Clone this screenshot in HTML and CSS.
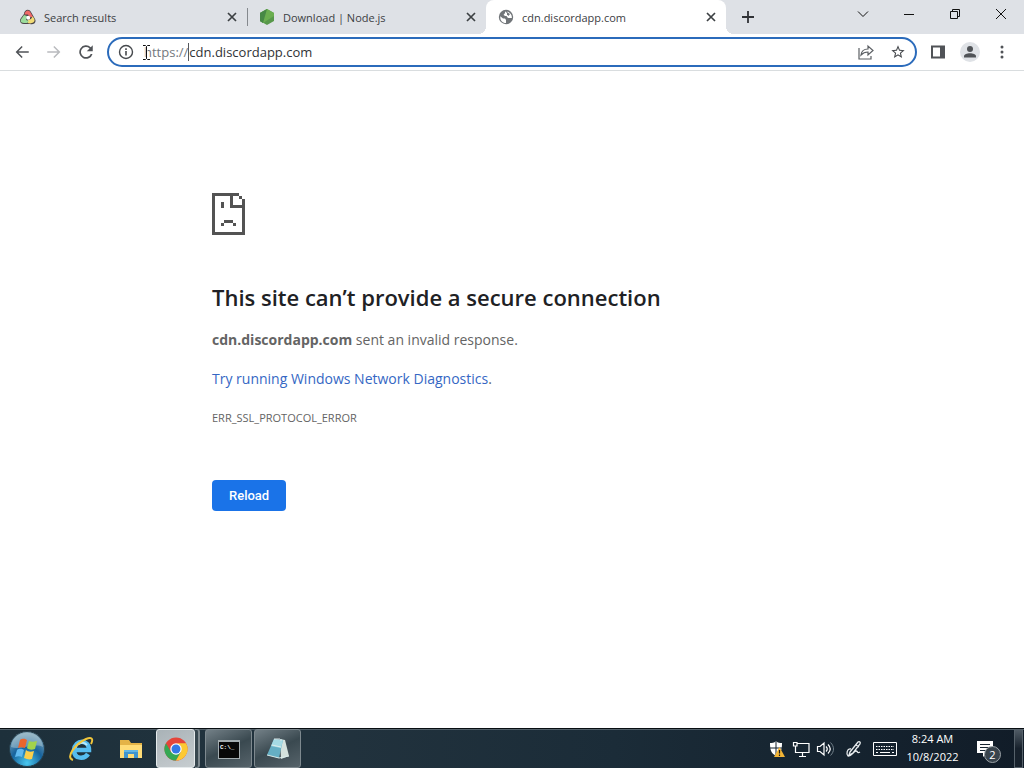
FILE: index.html
```html
<!DOCTYPE html>
<html lang="en">
<head>
<meta charset="utf-8">
<title>cdn.discordapp.com</title>
<link rel="stylesheet" href="styles.css">
</head>
<body>
<header class="browser">
  <div class="tabstrip">
    <div class="tab">
      <svg class="favicon" viewBox="0 0 16 16"><path d="M4 5C4 1 9-1 11 3l4 7c2 4-2 6-5 5H4C0 15-1 11 1 9z" fill="#4a4446"/><path d="M4.500 5.500C5 1 9 0 10.500 3.500L13 8 9.500 8 8 5.500z" fill="#f06a68"/><path d="M12.500 7.500c5 5 0 8-5 6.500L8 11l3-1z" fill="#f2dc76"/><path d="M4 6l3 1-1 4 3 1-2 2H4c-4 0-4-3-2-5z" fill="#9bdc9c"/><circle cx="8.200" cy="8.700" r="2" fill="#fff"/></svg>
      <span class="tab-title">Search results</span>
      <button class="tab-close" aria-label="Close tab"><svg viewBox="0 0 16 16"><path d="M4 4l8 8M12 4l-8 8"/></svg></button>
    </div>
    <div class="tab divided">
      <svg class="favicon" viewBox="0 0 16 16"><path d="M8 0l7 4v8l-7 4-7-4V4z" fill="#58984b"/><path d="M8 0l7 4v3L4 14l-3-2V4z" fill="#6bae50"/><path d="M8 0L4 14l-3-2V4z" fill="#478846"/></svg>
      <span class="tab-title">Download | Node.js</span>
      <button class="tab-close" aria-label="Close tab"><svg viewBox="0 0 16 16"><path d="M4 4l8 8M12 4l-8 8"/></svg></button>
    </div>
    <div class="tab active">
      <svg class="favicon" viewBox="0 0 16 16"><circle cx="8" cy="8" r="7.200" fill="#717579"/><path d="M2.300 7.200L5 9.500h2l1 1.500v3C4 14 2 11 2.300 7.200zM7.500 2.200c-1 1.500 0 2-1.500 3-1 .8.500 1.800 2 1.800 1.500.2 1 1.800 2.500 2h3.300c.5-3-2-6.300-5-6.300.6 1.400-.3 1.600-1.300-.5z" fill="#fff"/><path d="M9 3l3 2-1.500 2L9 5.500z" fill="#717579"/></svg>
      <span class="tab-title">cdn.discordapp.com</span>
      <button class="tab-close" aria-label="Close tab"><svg viewBox="0 0 16 16"><path d="M4 4l8 8M12 4l-8 8"/></svg></button>
    </div>
    <button class="new-tab" aria-label="New tab"><svg viewBox="0 0 16 16"><path d="M8 2v12M2 8h12"/></svg></button>
    <div class="window-controls">
      <button aria-label="Search tabs"><svg viewBox="0 0 12 12"><path d="M1 3.500l5 5 5-5"/></svg></button>
      <button aria-label="Minimize"><svg viewBox="0 0 12 12"><path d="M1 6.500h10"/></svg></button>
      <button aria-label="Restore"><svg viewBox="0 0 12 12"><path d="M1.500 3.500h7v7h-7zM3.500 3.500v-2h7v7h-2"/></svg></button>
      <button aria-label="Close"><svg viewBox="0 0 12 12"><path d="M1 1l10 10M11 1L1 11"/></svg></button>
    </div>
  </div>
  <div class="toolbar">
    <div class="nav">
      <button aria-label="Back"><svg viewBox="0 0 24 24"><path d="M21 11H7.300l5.600-5.600L11.500 4l-8 8 8 8 1.400-1.400L7.300 13H21z"/></svg></button>
      <button aria-label="Forward" disabled><svg viewBox="0 0 24 24"><path d="M3 11h13.700l-5.600-5.600L12.500 4l8 8-8 8-1.400-1.400 5.600-5.600H3z"/></svg></button>
      <button aria-label="Reload page"><svg viewBox="0 0 24 24"><path d="M18.360 5.640A9 9 0 1 0 20.700 14.500h-2.400A6.750 6.750 0 1 1 16.750 7.250L13 11h8V3z"/></svg></button>
    </div>
    <div class="omnibox">
      <button class="site-info" aria-label="View site information"><svg viewBox="0 0 16 16"><circle cx="8" cy="8" r="6.500" fill="none" stroke="#46494d" stroke-width="1.400"/><path d="M7.200 7h1.600v4.500H7.200zM7.200 4.300h1.600v1.600H7.200z"/></svg></button>
      <label for="address" class="scheme">https://</label>
      <input id="address" class="address" type="text" value="cdn.discordapp.com" spellcheck="false">
      <button aria-label="Share"><svg class="share" viewBox="0 0 18 18"><path d="M2 5v11h12v-3M4 12c.5-4 3-6 7-6V3l5 4.500-5 4.500V9c-3 0-5 .8-7 3z"/></svg></button>
      <button aria-label="Bookmark this tab"><svg viewBox="0 0 24 24"><path d="M22 9.240l-7.190-.62L12 2 9.190 8.630 2 9.240l5.460 4.730L5.820 21 12 17.270 18.180 21l-1.630-7.030zM12 15.400l-3.760 2.270 1-4.280-3.320-2.880 4.380-.38L12 6.100l1.710 4.040 4.380.38-3.320 2.880 1 4.280z"/></svg></button>
      <svg class="pointer" viewBox="0 0 9 17"><path d="M1 1.500h2.500l1 1 1-1H8M4.500 2.500v12M1 15.500h2.500l1-1 1 1H8" fill="none" stroke="#fff" stroke-width="2"/><path d="M1 1.500h2.500l1 1 1-1H8M4.500 2.500v12M1 15.500h2.500l1-1 1 1H8" fill="none" stroke="#111"/></svg>
    </div>
    <div class="nav">
      <button aria-label="Side panel"><svg viewBox="0 0 18 18"><path d="M2 2.500h14v13H2zM4 4.500v9h7v-9z" fill-rule="evenodd"/></svg></button>
      <button aria-label="Profile"><svg class="avatar" viewBox="0 0 20 20"><circle cx="10" cy="10" r="10" fill="#dfe2e6"/><circle cx="10" cy="7" r="3"/><path d="M4 15.500v-1.200c0-4 12-4 12 0v1.200z"/></svg></button>
      <button aria-label="Menu"><svg viewBox="0 0 18 18"><circle cx="9" cy="4" r="1.500"/><circle cx="9" cy="9" r="1.500"/><circle cx="9" cy="14" r="1.500"/></svg></button>
    </div>
  </div>
</header>
<main class="page">
  <div class="error">
    <svg class="sad" viewBox="0 0 11 14" shape-rendering="crispEdges"><path d="M0 0h9v1h1v1h1v12H0zM1 1v12h9V5H6V1zM7 1v3h3V2H9V1zM3 3h1v2H3zM4 9h3v1H4zM3 10h1v1H3zM7 10h1v1H7z" fill-rule="evenodd"/></svg>
    <h1>This site can’t provide a secure connection</h1>
    <p><strong>cdn.discordapp.com</strong> sent an invalid response.</p>
    <p><a href="#diagnostics">Try running Windows Network Diagnostics</a>.</p>
    <p class="code">ERR_SSL_PROTOCOL_ERROR</p>
    <button class="reload">Reload</button>
  </div>
</main>
<footer class="taskbar">
  <button class="start" aria-label="Start"><svg viewBox="0 0 36 36"><defs><radialGradient id="orb" cx=".5" cy=".9" r=".9"><stop offset="0" stop-color="#49c8ef"/><stop offset=".5" stop-color="#17639d"/><stop offset="1" stop-color="#8babb9"/></radialGradient></defs><circle cx="18" cy="18" r="17.500" fill="url(#orb)" stroke="#263e4b"/><path d="M2 16C4-3 32-3 34 16c-9-5-23 4-32 0z" fill="#c9dde1" opacity=".4"/><path d="M11 9c3-2 5-1 7 0l-2 8c-3-1-5-1-7 0z" fill="#ec652d"/><path d="M20 10c2 1 5 1 8 0l-2 8c-3 1-6 1-8-1z" fill="#a2d34b"/><path d="M8 19c3-2 5-1 7 0l-2 7c-2-1-4-1-7 0z" fill="#61b9ef"/><path d="M17 19c2 2 5 2 8 1l-2 8c-3 1-5 0-8-1z" fill="#fccf4b"/></svg></button>
  <button class="pinned" aria-label="Internet Explorer"><svg viewBox="0 0 26 26"><path d="M6 14h15c0-11-14-11-15 0 0 10 11 9 14 4" fill="none" stroke="#56bdf0" stroke-width="4.500"/><path d="M7 12C9 7 15 5 19 9" fill="none" stroke="#b6e8fc" stroke-width="2"/><path d="M5 24C-3 22 7 8 18 3c5-2 8-1 5 5" fill="none" stroke="#f1c63b" stroke-width="2"/></svg></button>
  <button class="pinned" aria-label="File Explorer"><svg viewBox="0 0 26 26"><path d="M2 4h9l2 3h11v15H2z" fill="#e4b347"/><path d="M2 9h22v13H2z" fill="#ffdc77"/><path d="M6 22v-8h14v8h-4v-4h-6v4z" fill="#4094ce"/><path d="M6 14h14v2H6z" fill="#63b6e4"/></svg></button>
  <button class="task current" aria-label="Google Chrome"><svg viewBox="0 0 24 24"><circle cx="12" cy="12" r="11.500" fill="#e5453a"/><path d="M2 6.200A11.500 11.500 0 0 0 12 23.500l5-8.700-5 2.200-5-2z" fill="#35a854"/><path d="M22 6.200A11.500 11.500 0 0 1 12 23.500l5-8.700 0-5.500-4-3.100z" fill="#fcc934"/><circle cx="12" cy="12" r="5.700" fill="#fff"/><circle cx="12" cy="12" r="4.500" fill="#3478e5"/></svg></button>
  <span class="stack"></span>
  <button class="task" aria-label="Command Prompt"><svg viewBox="0 0 24 24"><path d="M1 3h22v19H1z" fill="#a4adb0"/><path d="M2 5h20v16H2z" fill="#080808"/><text x="3" y="12" class="prompt">C:\_</text></svg></button>
  <button class="task" aria-label="Notepad"><svg viewBox="0 0 24 24"><path d="M14 2l5 1 4 16-8 3z" fill="#d4e1dd"/><path d="M8 2l9 1-4 18-12-3z" fill="#65afc4"/><path d="M8 2l9 1-2 8-10-2z" fill="#a5dae3"/><path d="M6 8l9 2M1 18l12 3 10-2" fill="none" stroke="#daeceb"/><path d="M9 1v2M11 1v2M13 1v2M15 2v2" stroke="#dbe6e8"/></svg></button>
  <div class="tray">
    <button aria-label="Security"><svg viewBox="0 0 18 18"><path d="M8 1c2 2 4 2 6 2 0 7-1 10-6 13C3 13 2 10 2 3c2 0 4 0 6-2z" fill="#fff"/><path d="M8 1v15M2 8h12" stroke="#13202c"/><path d="M11.500 7l5.500 10H6z" fill="#f3b536"/><path d="M11.500 10v3.500M11.500 14.500V16" stroke="#1b1b1b" stroke-width="1.200"/></svg></button>
    <button aria-label="Network"><svg viewBox="0 0 18 18"><path d="M5 3.500h12v9H3.500V8M10.500 13v3M7 16.500h7M1.500 2.500H5V6H1.500zM3.500 6v3" fill="none" stroke="#fff" stroke-width="1.200"/></svg></button>
    <button aria-label="Volume"><svg viewBox="0 0 18 18"><path d="M1.500 6.500H4L8 3v12l-4-3.500H1.500zM10 6.500c1.500 1.500 1.500 3.500 0 5M12 4.500c3 3 3 6 0 9" fill="none" stroke="#fff" stroke-width="1.200"/><path d="M14.500 2.500c4 4 4 9 0 13" fill="none" stroke="#72808a"/></svg></button>
    <button class="pen" aria-label="Windows Ink"><svg viewBox="0 0 18 18"><path d="M5 12L13 2c1-1 3 0 2 2l-7 9-4 2zM6 9c-4-1-5 5-3 7 3 1 5-4 8-5 2 0 1 3 4 1M11 5l3 2" fill="none" stroke="#e9edef" stroke-width="1.300"/></svg></button>
    <button class="keyboard" aria-label="Touch keyboard"><svg viewBox="0 0 24 14"><path d="M.5.500h23v13H.5z" fill="none" stroke="#fff"/><path d="M3 4.500h18M3 7.500h18" stroke="#fff" stroke-dasharray="1.500 1"/><path d="M3 10.500h2M7 10.500h10M19 10.500h2" stroke="#fff"/></svg></button>
  </div>
  <div class="clock"><time>8:24 AM</time><time>10/8/2022</time></div>
  <button class="notices" aria-label="2 notifications"><svg viewBox="0 0 18 18"><path d="M1 1h16v12h-6l-4 4v-4H1z" fill="#fff"/><path d="M4 4.500h10M4 7.500h10M4 10.500h6" stroke="#172532"/></svg><span class="badge">2</span></button>
  <button class="desktop" aria-label="Show desktop"></button>
</footer>
</body>
</html>
```

FILE: styles.css
```css
* { box-sizing: border-box; }
body {
  margin: 0;
  min-height: 100vh;
  display: flex;
  flex-direction: column;
  background: #fff;
  font-family: "Open Sans", "Noto Sans", sans-serif;
  font-size: 11px;
  color: #3c4043;
}
button {
  display: flex;
  align-items: center;
  justify-content: center;
  flex: none;
  padding: 0;
  border: 0;
  background: none;
  font: inherit;
  color: inherit;
}
svg { display: block; flex: none; }

/* Tab strip */
.tabstrip {
  display: flex;
  height: 34px;
  padding-left: 8px;
  background: #dee1e6;
}
.tab {
  position: relative;
  display: flex;
  align-items: center;
  gap: 8px;
  flex: 0 1 239px;
  min-width: 0;
  padding: 0 7px 0 12px;
}
.divided::before {
  content: "";
  position: absolute;
  left: 0;
  top: 8px;
  width: 1px;
  height: 18px;
  background: #85898e;
}
.active {
  flex-basis: 240px;
  background: #fff;
  border-radius: 8px 8px 0 0;
}
.active::before, .active::after {
  content: "";
  position: absolute;
  bottom: 0;
  width: 8px;
  height: 8px;
}
.active::before { right: 100%; background: radial-gradient(circle at 0 0, transparent 8px, #fff 8px); }
.active::after { left: 100%; background: radial-gradient(circle at 100% 0, transparent 8px, #fff 8px); }
.favicon { width: 16px; height: 16px; }
.tab-title { flex: 1; overflow: hidden; white-space: nowrap; }
.tab-close svg { width: 16px; height: 16px; }
.tab-close path { fill: none; stroke: #3c4043; stroke-width: 1.7; }
.new-tab { width: 28px; margin-left: 8px; }
.new-tab svg { width: 16px; height: 16px; }
.new-tab path { fill: none; stroke: #303236; stroke-width: 1.8; }
.window-controls { display: flex; height: 28px; margin-left: auto; }
.window-controls button { width: 46px; }
.window-controls svg { width: 12px; height: 12px; }
.window-controls path { fill: none; stroke: #111; }

/* Toolbar */
.toolbar {
  display: flex;
  align-items: center;
  gap: 5px;
  height: 37px;
  padding: 0 6px;
  border-bottom: 1px solid #d9dddf;
}
.nav { display: flex; }
.nav button { width: 32px; height: 32px; }
.nav svg { width: 18px; height: 18px; fill: #505357; }
.nav svg.avatar { width: 20px; height: 20px; }
.nav button:disabled svg { fill: #b9bbbe; }
.omnibox {
  position: relative;
  display: flex;
  align-items: center;
  flex: 1;
  min-width: 0;
  height: 30px;
  padding: 0 1px 0 9px;
  border: 2px solid #2b6bbb;
  border-radius: 15px;
  font-size: 13px;
}
.omnibox svg { width: 16px; height: 16px; fill: #46494d; }
.omnibox button { width: 32px; }
.omnibox .site-info { width: 16px; margin-right: 10px; }
.omnibox .share { width: 18px; height: 18px; fill: none; stroke: #5b5f63; stroke-width: 1.2; }
.scheme { color: #74797e; border-right: 1px solid #55585c; }
.address {
  flex: 1;
  min-width: 0;
  padding: 0;
  border: 0;
  outline: 0;
  background: none;
  font: inherit;
  color: #303236;
}
.omnibox .pointer { position: absolute; left: 33px; top: 5px; width: 9px; height: 17px; }

/* Error page */
.page { flex: 1; padding: 122px 24px 24px; }
.error { max-width: 600px; margin: 0 auto; color: #646464; font-size: 14px; line-height: 24px; }
.sad { width: 33px; height: 42px; fill: #535353; }
h1 { margin: 47px 0 16px; font-size: 22px; line-height: 30px; font-weight: 600; color: #202124; }
p { margin: 0 0 15px; }
a { color: #3567c4; text-decoration: none; }
.code { font-size: 11px; }
.reload {
  height: 31px;
  margin-top: 50px;
  padding: 0 17px;
  border-radius: 4px;
  background: #1a73e8;
  color: #fff;
  font: 500 13px Roboto, sans-serif;
}

/* Taskbar */
.taskbar {
  display: flex;
  height: 40px;
  border-top: 1px solid #080e12;
  background: linear-gradient(90deg, #1d303b, #22333e 30%, #1b2c38 60%, #111c28);
  box-shadow: inset 0 1px #53616a;
  color: #fff;
}
.start { width: 38px; margin-left: 8px; }
.start svg { width: 36px; height: 36px; }
.pinned { width: 50px; margin-left: 10px; }
.pinned + .pinned { margin-left: 0; }
.pinned svg { width: 26px; height: 26px; }
.task {
  width: 47px;
  margin-right: 2px;
  border: 1px solid #7e898f;
  border-radius: 3px;
  background: linear-gradient(155deg, #738087, #3a4950 50%, #56636a);
}
.task svg { width: 24px; height: 24px; }
.current {
  width: 39px;
  margin: 0;
  border-color: #e5eaec;
  background: linear-gradient(155deg, #a9b2b7, #c7cdd0);
}
.stack { width: 5px; margin-right: 5px; border: solid #7e898f; border-width: 1px 2px 1px 0; border-radius: 0 3px 3px 0; background: #38474f; }
.prompt { font: bold 6px "Liberation Mono", monospace; fill: #fff; }
.tray { display: flex; margin-left: auto; }
.tray button { width: 24px; }
.tray svg { width: 18px; height: 18px; }
.tray .pen { width: 33px; }
.tray .keyboard { width: 29px; }
.tray .keyboard svg { width: 24px; height: 14px; }
.clock {
  display: flex;
  flex-direction: column;
  align-items: center;
  justify-content: center;
  width: 67px;
  padding-bottom: 2px;
  line-height: 18px;
}
.notices { position: relative; width: 38px; margin-right: 10px; }
.notices svg { width: 18px; height: 18px; }
.badge {
  position: absolute;
  left: 18px;
  top: 17px;
  width: 17px;
  height: 17px;
  border: 1px solid #9ca3a8;
  border-radius: 50%;
  background: #38434c;
  line-height: 15px;
}
.desktop {
  width: 9px;
  margin-right: 1px;
  border: 1px solid #56616a;
  background: linear-gradient(#505b65, #17212c 50%);
}
```
